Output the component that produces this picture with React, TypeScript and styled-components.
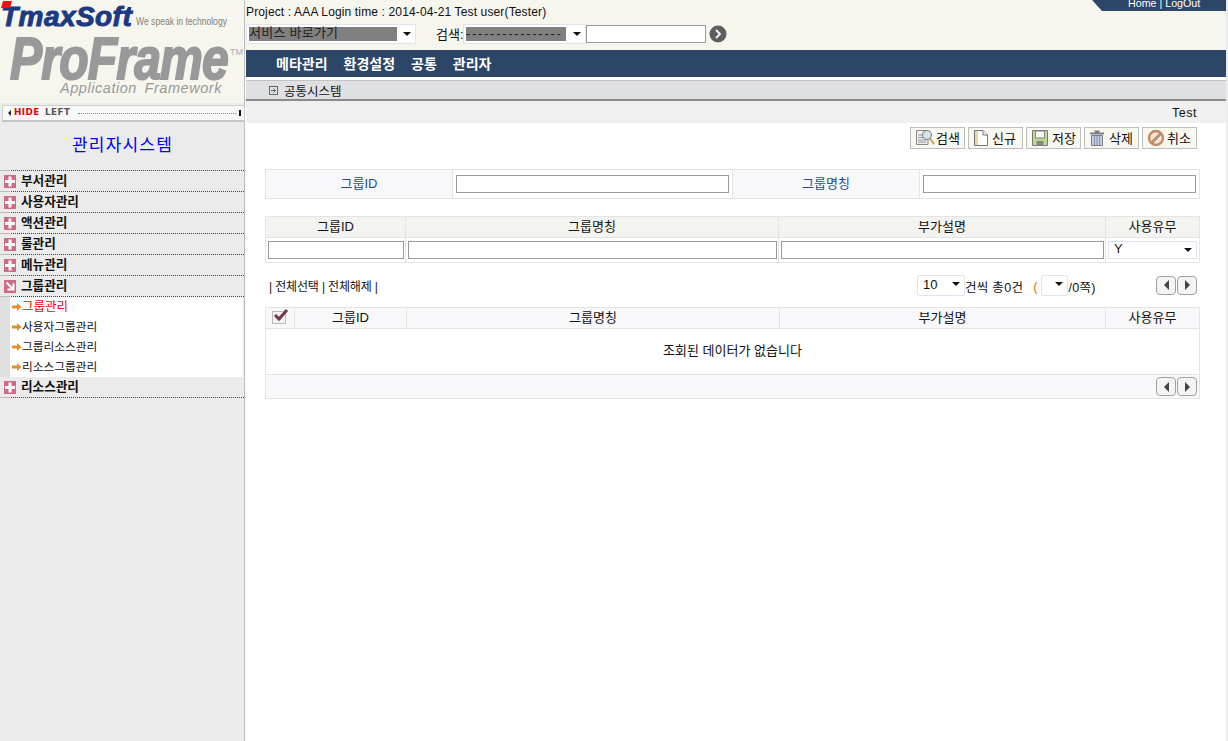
import React from 'react';
import styled, { createGlobalStyle } from 'styled-components';

const Global = createGlobalStyle`
  html, body { margin: 0; padding: 0; background: #fff; overflow: hidden; }
  * { box-sizing: border-box; }
  body { font-family: "Liberation Sans", "Noto Sans CJK KR", sans-serif; font-size: 13px; color: #111; }
`;

const Page = styled.div`
  display: flex; width: 1228px; height: 741px; overflow: hidden; background: #fff;
`;

/* ---------- Sidebar ---------- */
const Sidebar = styled.aside`
  width: 245px; flex: none; height: 100%; background: #ebebeb; border-right: 1px solid #bcbcbc;
  display: flex; flex-direction: column;
`;
const LogoArea = styled.div`
  height: 103px; background: #f6f5ee; overflow: hidden; display: flex; flex-direction: column;
`;
const BrandRow = styled.div`
  height: 32px; display: flex; align-items: flex-end; padding-left: 1px; position: relative; flex: none;
`;
const BrandMark = styled.svg`
  position: absolute; left: 1px; top: 1px;
`;
const BrandName = styled.span`
  font: italic 700 28px/30px "Liberation Sans", sans-serif; color: #1b3a82; letter-spacing: 0.45px;
  -webkit-text-stroke: 1px #1b3a82; width: 135px; flex: none; white-space: nowrap;
`;
const BrandTag = styled.span`
  font: 400 11px/14px "Liberation Sans", sans-serif; color: #808080; margin-bottom: 4px;
  white-space: nowrap; width: 92px; flex: none; transform: scaleX(0.78); transform-origin: left;
`;
const ProductRow = styled.div`
  height: 50px; padding-left: 10px; display: flex; align-items: flex-start; margin-top: -2px; white-space: nowrap; flex: none;
`;
const ProductName = styled.span`
  font: italic 700 59px/58px "Liberation Sans", sans-serif; color: #999; letter-spacing: -1px;
  -webkit-text-stroke: 2px #999; width: 220px; flex: none; transform: scaleX(0.815); transform-origin: left;
`;
const Tm = styled.span`
  font: 400 9px/10px "Liberation Sans", sans-serif; color: #aaa; margin: 17px 0 0 0;
`;
const ProductSub = styled.div`
  font: italic 400 14.5px/16px "Liberation Sans", sans-serif; color: #999; letter-spacing: 0.55px;
  padding-left: 60px; margin-top: 0; white-space: nowrap; word-spacing: 3px;
`;
const HideBar = styled.div`
  height: 17px; margin: 2px 0 0 2px; width: 243px; background: #f8f8f8; border: 1px solid #d0d0d0; flex: none;
  border-bottom: 2px solid #c4c4c4; display: flex; align-items: center; padding: 0 2px 0 5px; gap: 3px;
`;
const Tri = styled.span<{ $dir: 'l' | 'r' | 'd'; $size?: number; $color?: string }>`
  display: block; width: 0; height: 0; flex: none;
  ${p => {
    const s = p.$size ?? 3; const c = p.$color ?? '#222';
    if (p.$dir === 'l') return `border-top:${s}px solid transparent;border-bottom:${s}px solid transparent;border-right:${s}px solid ${c};`;
    if (p.$dir === 'r') return `border-top:${s}px solid transparent;border-bottom:${s}px solid transparent;border-left:${s}px solid ${c};`;
    return `border-left:${s}px solid transparent;border-right:${s}px solid transparent;border-top:${s}px solid ${c};`;
  }}
`;
const HideWord = styled.span<{ $red?: boolean }>`
  font: 700 8px/10px "DejaVu Sans", sans-serif; letter-spacing: 0.4px; transform: scaleX(1.1); transform-origin: left;
  width: ${p => (p.$red ? '28px' : '27px')};
  color: ${p => (p.$red ? '#f00000' : '#555')};
`;
const HideDots = styled.span`
  flex: 1; border-top: 1px dotted #888; margin-left: 3px;
`;
const HideEnd = styled.span`
  width: 2px; height: 6px; background: #111; margin-right: 1px;
`;
const SideTitle = styled.div`
  height: 49px; padding: 14px 0 0 1px; text-align: center; color: #0000f0; font-size: 17px; line-height: 20px; flex: none;
  letter-spacing: 1.2px; border-bottom: 1px dotted #444; position: relative;
  &::after { content: ''; position: absolute; left: 0; bottom: -1px; width: 10px; height: 1px; background: #bbb; }
`;
const MenuRow = styled.div`
  height: 21px; display: flex; align-items: center; gap: 5px; padding-left: 4px; border-bottom: 1px dotted #444; flex: none;
  font-weight: 700; font-size: 12.6px; color: #111; position: relative;
  &::after { content: ''; position: absolute; left: 0; bottom: -1px; width: 10px; height: 1px; background: #bbb; }
`;
const MenuLabel = styled.span` margin-top: -4px; `;
const SubList = styled.div`
  margin-left: 10px; width: 233px; background: #fff; display: flex; flex-direction: column; flex: none;
  position: relative;
  height: 80px;
  &::before { content: ''; position: absolute; left: -10px; top: 0; bottom: 0; width: 10px; background: #e0e0e0; }
`;
const SubRow = styled.div<{ $active?: boolean }>`
  height: 20px; display: flex; align-items: center; padding-left: 2px;
  font-size: ${p => (p.$active ? '12.5px' : '11.7px')};
  color: ${p => (p.$active ? '#f00000' : '#111')};
`;
const SubLabel = styled.span` margin-top: -3px; `;

const PinkIcon = ({ open }: { open?: boolean }) => (
  <svg width="12" height="13" viewBox="0 0 12 13" style={{ flex: 'none' }}>
    <rect width="12" height="13" fill="#cf6a86" />
    {open ? (
      <path d="M2.5 2.5L8.5 8.5M9.5 3.5V9.5H3.5" stroke="#fff" strokeWidth="2" fill="none" />
    ) : (
      <path d="M6 1.5V11.5M1 6.5H11" stroke="#fff" strokeWidth="3" fill="none" />
    )}
  </svg>
);
const ArrowIcon = () => (
  <svg width="10" height="8" viewBox="0 0 10 8" style={{ flex: 'none' }}>
    <path d="M0 2.5H5V0L9.5 4L5 8V5.5H0Z" fill="#e2902a" />
  </svg>
);

/* ---------- Main ---------- */
const Main = styled.main`
  flex: 1; min-width: 0; display: flex; flex-direction: column; border-right: 2px solid #ececec; position: relative;
`;
const Header = styled.header`
  height: 50px; background: #f6f5ee; padding: 5px 0 0 1px;
`;
const InfoLine = styled.div`
  font-size: 12px; line-height: 14px; height: 19px; white-space: nowrap; letter-spacing: 0.14px;
`;
const TopTab = styled.div`
  position: absolute; right: 0; top: 0; width: 134px; height: 11px; background: #2c4667; color: #fff;
  font-size: 10.7px; line-height: 7px; padding-left: 36px; white-space: nowrap; overflow: hidden;
  clip-path: polygon(0 0, 100% 0, 100% 100%, 10px 100%);
`;
const QuickRow = styled.div`
  display: flex; align-items: center; height: 20px;
`;
const SelectBox = styled.div<{ $w: number; $h?: number }>`
  width: ${p => p.$w}px; height: ${p => p.$h ?? 20}px; border: 1px solid #dfe4ee; background: #fff; flex: none;
  display: flex; align-items: center; padding: 2px 4px 2px 2px; font-size: 13px;
`;
const SelectValue = styled.div<{ $hl?: boolean; $w: number; $track?: number; $indent?: number; $raise?: number }>`
  width: ${p => p.$w}px; height: 100%; flex: none; white-space: nowrap; color: #222;
  line-height: ${p => 14 - 2 * (p.$raise ?? 0)}px;
  background: ${p => (p.$hl ? '#808080' : 'transparent')};
  letter-spacing: ${p => p.$track ?? 0}px; padding-left: ${p => p.$indent ?? 0}px;
`;
const SelectArrow = styled(Tri).attrs({ $dir: 'd' as const, $size: 4, $color: '#111' })`
  margin-left: auto;
`;
const SearchLabel = styled.span`
  margin-left: 20px; width: 27px; font-size: 13px; flex: none; white-space: nowrap; margin-top: -2px;
`;
const TextField = styled.input<{ $w?: number }>`
  width: ${p => (p.$w ? `${p.$w}px` : '100%')}; height: 18px; border: 1px solid #9a9a9a; background: #fff; padding: 0; display: block; flex: none; outline: none;
`;
const GoButton = styled.svg` margin-left: 3px; flex: none; `;

const Nav = styled.nav`
  height: 27px; margin-left: 1px; background: #2c4667; display: flex; align-items: center; gap: 16px; padding: 0 0 2px 30px;
  color: #fff; font-weight: 700; font-size: 14px;
`;
const NavGap = styled.div` height: 3px; background: #fff; `;
const TabBar = styled.div`
  height: 21px; margin-left: 1px; background: #dfe0e4; border-top: 1px solid #c2c2c2; border-bottom: 2px solid #8a8a8a;
  display: flex; align-items: center; gap: 6px; padding-left: 23px; font-size: 12.5px;
`;
const TitleBar = styled.div`
  height: 22px; margin-left: 1px; background: #f0f0f0; text-align: right; padding-right: 29px;
  font-size: 12.5px; line-height: 24px; letter-spacing: 0.5px;
`;
const Toolbar = styled.div`
  display: flex; justify-content: flex-end; gap: 3px; padding: 4px 29px 0 0; height: 46px;
`;
const ToolButton = styled.button<{ $gap: number }>`
  width: 55px; height: 22px; border: 1px solid #bdbdbd; background: #f8f8f0; padding: 0 0 1px 4px; margin: 0;
  display: flex; align-items: center; gap: ${p => p.$gap}px; font: 13px "Liberation Sans", "Noto Sans CJK KR", sans-serif; color: #111; white-space: nowrap;
`;
const Content = styled.div`
  padding-left: 20px; width: 955px; flex: 1; display: flex; flex-direction: column; gap: 17px;
`;
const Grid = styled.div<{ $cols: string }>`
  display: grid; grid-template-columns: ${p => p.$cols}; gap: 1px; background: #e4e4e4; border: 1px solid #e4e4e4; width: 935px;
`;
const Cell = styled.div<{ $bg?: string; $h: number; $color?: string; $span?: number; $field?: boolean }>`
  height: ${p => p.$h}px; background: ${p => p.$bg ?? '#fff'}; color: ${p => p.$color ?? '#111'};
  display: flex; align-items: center; min-width: 0;
  ${p => (p.$field ? 'padding: 0 1px 0 2px;' : 'justify-content: center; padding-bottom: 4px;')}
  ${p => (p.$span ? `grid-column: span ${p.$span};` : '')}
  font-size: 13px; white-space: nowrap;
`;
const FormField = styled(Cell)`
  padding: 0 3px;
`;
const Section = styled.div` display: flex; flex-direction: column; `;
const PagerRow = styled.div`
  height: 44px; width: 935px; display: flex; align-items: center; font-size: 12px; padding: 0 3px 0 4px;
`;
const Bulk = styled.div` font-size: 12px; white-space: nowrap; width: 648px; flex: none; letter-spacing: -0.15px; `;
const PagerText = styled.span`
  font-size: 12.5px; white-space: nowrap; flex: none; padding-top: 3px; letter-spacing: 0.3px;
`;
const Paren = styled.span` color: #c07010; margin: 0 4px 0 10px; padding-top: 3px; flex: none; font-size: 12.5px; `;
const PageSelect = styled.div<{ $w: number }>`
  width: ${p => p.$w}px; height: 21px; border: 1px solid #dfe4ee; border-radius: 2px; background: #fff; flex: none;
  display: flex; align-items: center; padding: 0 4px 2px 5px; font-size: 13px;
`;
const ArrowPair = styled.div<{ $auto?: boolean }>`
  display: flex; gap: 1px; flex: none; ${p => (p.$auto ? 'margin-left: auto;' : '')}
`;
const ArrowButton = styled.div`
  width: 20px; height: 19px; border: 1px solid #a0a0a0; border-radius: 4px; background: #f4f4f4;
  display: flex; align-items: center; justify-content: center;
`;
const Footer = styled.div`
  grid-column: 1 / -1; height: 23px; background: #f8f8fa; display: flex; justify-content: flex-end; align-items: center; padding-right: 2px;
`;
const CheckIcon = () => (
  <svg width="17" height="16" viewBox="0 0 17 16">
    <rect x="0.5" y="3.5" width="13" height="12" fill="#f4f4f4" stroke="#bbb" />
    <path d="M3 7L7 11L15 2" stroke="#78354f" strokeWidth="3" fill="none" />
  </svg>
);

const Arrows = ({ auto }: { auto?: boolean }) => (
  <ArrowPair $auto={auto}>
    <ArrowButton><Tri $dir="l" $size={5} $color="#444" /></ArrowButton>
    <ArrowButton><Tri $dir="r" $size={5} $color="#444" /></ArrowButton>
  </ArrowPair>
);

const SearchIcon = () => (
  <svg width="20" height="18" viewBox="0 0 20 18">
    <path d="M1.5 1.5H11L13 3.5V15.5H1.5Z" fill="#eee" stroke="#888" />
    <path d="M3 6H9M3 8.5H9M3 11H11M3 13H11" stroke="#999" />
    <circle cx="12" cy="6" r="4.5" fill="#cfe6ee" stroke="#777" />
    <path d="M15 9.5L19 15" stroke="#c9a24e" strokeWidth="2" />
  </svg>
);
const NewIcon = () => (
  <svg width="16" height="18" viewBox="0 0 16 18">
    <path d="M1.5 1.5H10L14.5 6V16.5H1.5Z" fill="#fff" stroke="#777" />
    <path d="M2 2H5V16H2Z" fill="#e6d9a0" />
    <path d="M10 1.5V6H14.5" fill="#eee" stroke="#777" />
  </svg>
);
const SaveIcon = () => (
  <svg width="18" height="18" viewBox="0 0 18 18">
    <path d="M1.5 1.5H16.5V16.5H1.5Z" fill="#b9dc8f" stroke="#777" />
    <rect x="4.5" y="2" width="9" height="7" fill="#f4f4f4" stroke="#888" />
    <rect x="5.5" y="12" width="7" height="4.5" fill="#888" />
  </svg>
);
const TrashIcon = () => (
  <svg width="16" height="18" viewBox="0 0 16 18">
    <path d="M5.5 2.5H10.5M1 4.5H15" stroke="#7a7f8c" strokeWidth="2" fill="none" />
    <path d="M2.5 6.5H13.5V16.5H2.5Z" fill="#c6cbe0" stroke="#7a7f8c" />
    <path d="M5.5 7V16M8 7V16M10.5 7V16" stroke="#8b90a8" />
  </svg>
);
const CancelIcon = () => (
  <svg width="18" height="18" viewBox="0 0 18 18">
    <circle cx="9" cy="9" r="7" fill="#f3e6d8" stroke="#c48a62" strokeWidth="2.4" />
    <path d="M4.5 13.5L13.5 4.5" stroke="#c48a62" strokeWidth="2.4" />
    <path d="M5.5 14.5L14.5 5.5" stroke="#888" strokeWidth="0.7" />
  </svg>
);

const menusTop = ['부서관리', '사용자관리', '액션관리', '룰관리', '메뉴관리'];
const subMenus = ['그룹관리', '사용자그룹관리', '그룹리소스관리', '리소스그룹관리'];
const tools = [
  { icon: <SearchIcon />, label: '검색', gap: 1 },
  { icon: <NewIcon />, label: '신규', gap: 3 },
  { icon: <SaveIcon />, label: '저장', gap: 3 },
  { icon: <TrashIcon />, label: '삭제', gap: 4 },
  { icon: <CancelIcon />, label: '취소', gap: 2 },
];
const filterCols = '139px 372px 326px 93px';
const listCols = '28px 111px 372px 325px 93px';
const headers = ['그룹ID', '그룹명칭', '부가설명', '사용유무'];
const hdrBg = '#f3f3ef';
const listBg = '#f8f8fa';

export default function App() {
  return (
    <Page>
      <Global />
      <Sidebar>
        <LogoArea>
          <BrandRow>
            <BrandMark width="12" height="8" viewBox="0 0 12 8"><path d="M2 0H11L9 7H0Z" fill="#ee1111" /></BrandMark>
            <BrandName>TmaxSoft</BrandName>
            <BrandTag>We speak in technology</BrandTag>
          </BrandRow>
          <ProductRow>
            <ProductName>ProFrame</ProductName>
            <Tm>TM</Tm>
          </ProductRow>
          <ProductSub>Application Framework</ProductSub>
        </LogoArea>
        <HideBar>
          <Tri $dir="l" $size={3} />
          <HideWord $red>HIDE</HideWord>
          <HideWord>LEFT</HideWord>
          <HideDots />
          <HideEnd />
        </HideBar>
        <SideTitle>관리자시스템</SideTitle>
        {menusTop.map(m => (
          <MenuRow key={m}><PinkIcon /><MenuLabel>{m}</MenuLabel></MenuRow>
        ))}
        <MenuRow><PinkIcon open /><MenuLabel>그룹관리</MenuLabel></MenuRow>
        <SubList>
          {subMenus.map((s, i) => (
            <SubRow key={s} $active={i === 0}><ArrowIcon /><SubLabel>{s}</SubLabel></SubRow>
          ))}
        </SubList>
        <MenuRow><PinkIcon /><MenuLabel>리소스관리</MenuLabel></MenuRow>
      </Sidebar>
      <Main>
        <Header>
          <InfoLine>Project : AAA Login time : 2014-04-21 Test user(Tester)</InfoLine>
          <QuickRow>
            <SelectBox $w={170}>
              <SelectValue $hl $w={148} $track={0.25} $raise={1}>서비스 바로가기</SelectValue>
              <SelectArrow />
            </SelectBox>
            <SearchLabel>검색:</SearchLabel>
            <SelectBox $w={123}>
              <SelectValue $hl $w={100} $track={1.7}>----------------</SelectValue>
              <SelectArrow />
            </SelectBox>
            <TextField $w={120} />
            <GoButton width="18" height="18" viewBox="0 0 18 18">
              <circle cx="9" cy="9" r="8.5" fill="#5e5e5e" />
              <path d="M7 5L11 9L7 13" stroke="#fff" strokeWidth="1.8" fill="none" />
            </GoButton>
          </QuickRow>
        </Header>
        <TopTab>Home | LogOut</TopTab>
        <Nav>
          <span>메타관리</span><span>환경설정</span><span>공통</span><span>관리자</span>
        </Nav>
        <NavGap />
        <TabBar>
          <svg width="9" height="9" viewBox="0 0 9 9">
            <rect x="0.5" y="0.5" width="8" height="8" fill="none" stroke="#666" />
            <path d="M2 4.5H6.5M4.5 2.5L6.5 4.5L4.5 6.5" stroke="#666" fill="none" />
          </svg>
          공통시스템
        </TabBar>
        <TitleBar>Test</TitleBar>
        <Toolbar>
          {tools.map(t => (
            <ToolButton key={t.label} $gap={t.gap}>{t.icon}{t.label}</ToolButton>
          ))}
        </Toolbar>
        <Content>
          <Grid $cols="186px 279px 186px 279px">
            <Cell $h={28} $bg="#f8f8fa" $color="#1f4f8f">그룹ID</Cell>
            <FormField $h={28} $field><TextField $w={273} /></FormField>
            <Cell $h={28} $bg="#f8f8fa" $color="#1f4f8f">그룹명칭</Cell>
            <FormField $h={28} $field><TextField $w={273} /></FormField>
          </Grid>
          <Section>
            <Grid $cols={filterCols}>
              {headers.map(h => <Cell key={h} $h={20} $bg={hdrBg}>{h}</Cell>)}
              <Cell $h={24} $field><TextField /></Cell>
              <Cell $h={24} $field><TextField /></Cell>
              <Cell $h={24} $field><TextField /></Cell>
              <Cell $h={24} $field>
                <SelectBox $w={89} $h={18}>
                  <SelectValue $w={30} $indent={3} $raise={2}>Y</SelectValue>
                  <SelectArrow />
                </SelectBox>
              </Cell>
            </Grid>
            <PagerRow>
              <Bulk>| 전체선택 | 전체해제 |</Bulk>
              <PageSelect $w={48}>10<SelectArrow /></PageSelect>
              <PagerText>건씩 총0건</PagerText>
              <Paren>(</Paren>
              <PageSelect $w={27}><SelectArrow /></PageSelect>
              <PagerText>/0쪽)</PagerText>
              <Arrows auto />
            </PagerRow>
            <Grid $cols={listCols}>
              <Cell $h={20} $bg={listBg}><CheckIcon /></Cell>
              {headers.map(h => <Cell key={h} $h={20} $bg={listBg}>{h}</Cell>)}
              <Cell $h={45} $span={5}>조회된 데이터가 없습니다</Cell>
              <Footer><Arrows /></Footer>
            </Grid>
          </Section>
        </Content>
      </Main>
    </Page>
  );
}
